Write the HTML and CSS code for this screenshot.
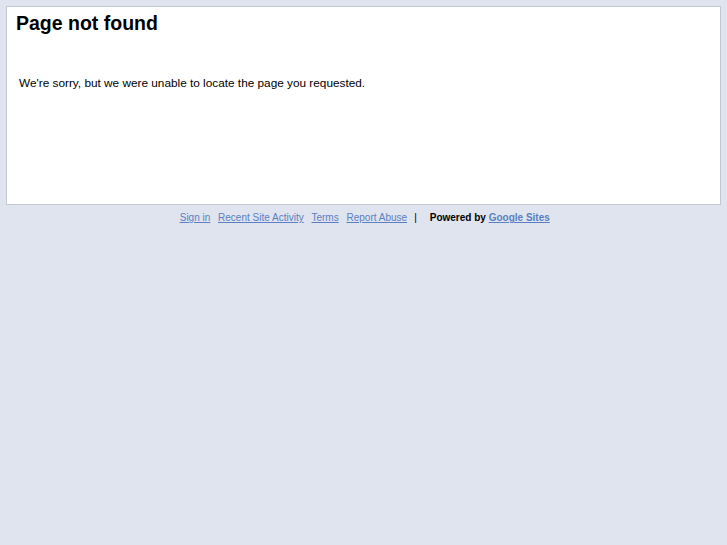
FILE: index.html
```html
<!DOCTYPE html>
<html lang="en">
<head>
  <meta charset="UTF-8">
  <title>Page not found</title>
  <link rel="stylesheet" href="styles.css">
</head>
<body>
  <div class="page-box">
    <h1 class="titulo">Page not found</h1>
    <p class="mensagem">We're sorry, but we were unable to locate the page you requested.</p>
  </div>

  <div class="rodape">
    <a href="#">Sign in</a>
    <a href="#">Recent Site Activity</a>
    <a href="#">Terms</a>
    <a href="#">Report Abuse</a>
    <span class="sep">|</span>
    <span class="powered">Powered by <a href="#">Google Sites</a></span>
  </div>
</body>
</html>
```

FILE: styles.css
```css
body {
  font-family: "Liberation Sans", Arial, sans-serif;
  background-color: #dfe4ee;
  margin: 0;
  padding: 6px;
}
.page-box {
  background-color: #fff;
  border: 1px solid #c3c9d4;
  box-sizing: border-box;
  height: 199px;
  padding: 5px 9px;
}
.titulo {
  font-size: 19.5px;
  font-weight: bold;
  color: #000;
  margin: 0;
  line-height: 23px;
}
.mensagem {
  font-size: 11.8px;
  color: #000;
  margin: 41px 0 0 3px;
}
.rodape {
  text-align: center;
  font-size: 10px;
  margin-top: 7px;
  color: #000;
}
.rodape a {
  color: #5a7fc4;
  margin: 0 2.5px;
}
.sep {
  margin: 0 10px 0 2px;
}
.powered {
  font-weight: bold;
}
.powered a {
  margin: 0;
}
```
